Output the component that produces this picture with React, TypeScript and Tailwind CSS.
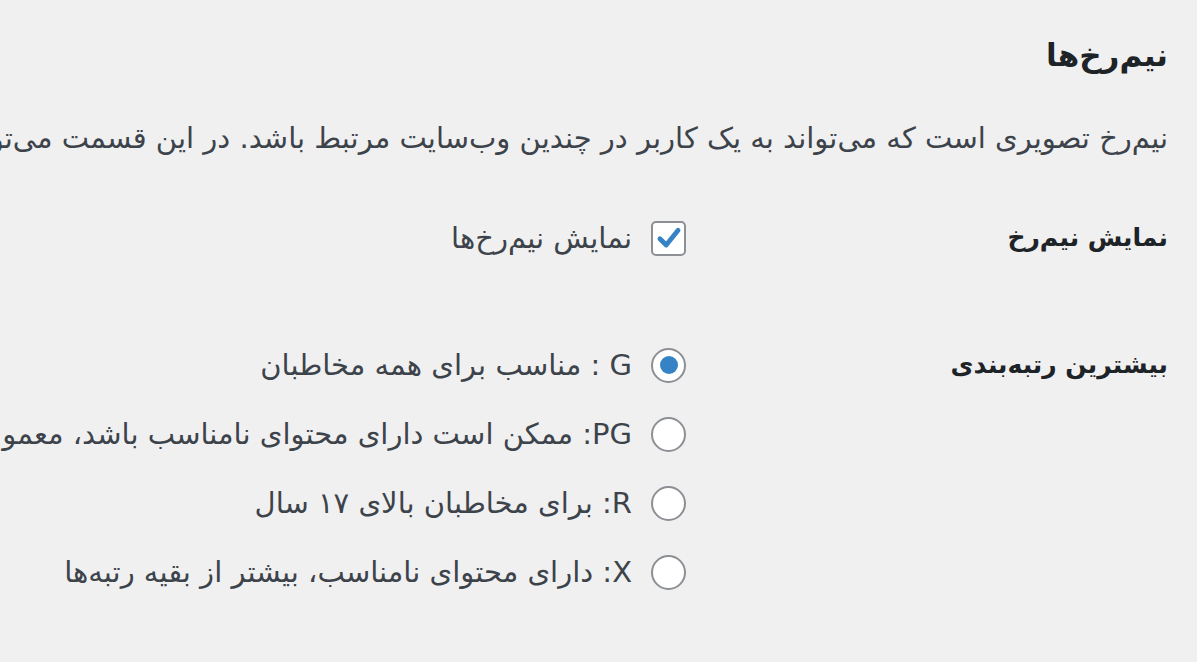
import React from "react";

const options = [
  { code: "G", text: " : مناسب برای همه مخاطبان", checked: true },
  { code: "PG", text: ": ممکن است دارای محتوای نامناسب باشد، معمولاً برای مخاطبان بالای ۱۳ سال", checked: false },
  { code: "R", text: ": برای مخاطبان بالای ۱۷ سال", checked: false },
  { code: "X", text: ": دارای محتوای نامناسب، بیشتر از بقیه رتبه‌ها", checked: false },
];

function Radio({ checked }: { checked: boolean }) {
  return (
    <span className="flex h-[35px] w-[35px] shrink-0 items-center justify-center rounded-full border-2 border-[#8c8f94] bg-white">
      {checked && <span className="h-[18px] w-[18px] rounded-full bg-[#3582c4]" />}
    </span>
  );
}

export default function App() {
  return (
    <div
      dir="rtl"
      className="h-[662px] w-[1197px] overflow-hidden bg-[#f0f0f1] pr-[29px] text-[#3c434a]"
      style={{ fontFamily: '"DejaVu Sans", sans-serif' }}
    >
      <h2 className="pt-[31px] text-[31px] font-bold leading-[48px] text-[#1d2327]">نیم‌رخ‌ها</h2>
      <p className="mt-[39px] whitespace-nowrap text-[29px] leading-[40px]">
        نیم‌رخ تصویری است که می‌تواند به یک کاربر در چندین وب‌سایت مرتبط باشد. در این قسمت می‌توانید انتخاب کنید که نیم‌رخ کاربرانی که در سایت شما دیدگاه می‌گذارند نمایش داده شود یا خیر.
      </p>

      <div className="mt-[60px] flex items-start">
        <div className="w-[482px] shrink-0 text-[25px] font-bold leading-[40px] text-[#1d2327]">نمایش نیم‌رخ</div>
        <label className="flex items-center gap-[19px] text-[29px] leading-[40px]">
          <span className="flex h-[35px] w-[35px] shrink-0 items-center justify-center rounded-[5px] border-2 border-[#8c8f94] bg-white">
            <svg viewBox="0 0 20 20" className="h-[28px] w-[28px]">
              <path d="M3.5 10.5 L8 15 L16.5 4.5" fill="none" stroke="#3582c4" strokeWidth="3.4" strokeLinecap="round" strokeLinejoin="round" />
            </svg>
          </span>
          <span>نمایش نیم‌رخ‌ها</span>
        </label>
      </div>

      <div className="mt-[87px] flex items-start">
        <div className="w-[482px] shrink-0 text-[25px] font-bold leading-[40px] text-[#1d2327]">بیشترین رتبه‌بندی</div>
        <div className="flex flex-col gap-[29px]">
          {options.map((o) => (
            <label key={o.code} className="flex items-center gap-[19px] whitespace-nowrap text-[29px] leading-[40px]">
              <Radio checked={o.checked} />
              <span>
                {o.code}
                {o.text}
              </span>
            </label>
          ))}
        </div>
      </div>
    </div>
  );
}
